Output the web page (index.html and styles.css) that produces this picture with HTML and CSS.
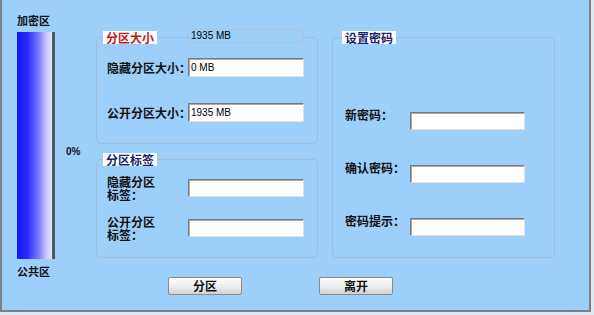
FILE: index.html
```html
<!DOCTYPE html>
<html lang="zh-CN">
<head>
    <meta charset="UTF-8">
    <title>分区</title>
    <link rel="stylesheet" href="styles.css">
</head>
<body>
    <div class="window">
        <div class="meter">
            <div class="meter-label">加密区</div>
            <div class="meter-bar"></div>
            <div class="meter-label">公共区</div>
        </div>
        <div class="percent">0%</div>

        <div class="panels">
            <div class="group group-size">
                <fieldset>
                    <legend>分区大小</legend>
                    <div class="rows rows-size">
                        <label class="row"><span>隐藏分区大小：</span><input type="text" value="0 MB"></label>
                        <label class="row"><span>公开分区大小：</span><input type="text" value="1935 MB"></label>
                    </div>
                </fieldset>
                <div class="total">1935 MB</div>
            </div>

            <div class="group group-pass">
                <fieldset>
                    <legend>设置密码</legend>
                    <div class="rows rows-pass">
                        <label class="row"><span>新密码：</span><input type="password"></label>
                        <label class="row"><span>确认密码：</span><input type="password"></label>
                        <label class="row"><span>密码提示：</span><input type="text"></label>
                    </div>
                </fieldset>
            </div>

            <div class="group group-tag">
                <fieldset>
                    <legend>分区标签</legend>
                    <div class="rows rows-tag">
                        <label class="row"><span>隐藏分区标签：</span><input type="text"></label>
                        <label class="row"><span>公开分区标签：</span><input type="text"></label>
                    </div>
                </fieldset>
            </div>

            <div class="actions">
                <button type="button">分区</button>
                <button type="button">离开</button>
            </div>
        </div>
    </div>
</body>
</html>
```

FILE: styles.css
```css
* {
    box-sizing: border-box;
}

body {
    margin: 0;
    background: #dfe8f1;
    font-family: "Noto Sans CJK SC", sans-serif;
    font-size: 12px;
    font-weight: bold;
    color: #111;
}

.window {
    width: 591px;
    height: 312px;
    display: flex;
    background: #9ccff9;
    border: 2px solid #75818c;
    border-top: none;
}

/* left meter */
.meter {
    width: 38px;
    margin-left: 15px;
    padding-top: 13px;
    display: flex;
    flex-direction: column;
}

.meter-label {
    height: 14px;
    line-height: 14px;
    font-size: 11px;
    white-space: nowrap;
}

.meter-bar {
    height: 227px;
    margin: 5px 0;
    background: linear-gradient(to right, #1414f6 0%, #2a2cff 30%, #7a7cff 62%, #c9cbff 85%, #e4e4ff 100%);
    border-right: 3px solid #4e5660;
}

.percent {
    width: 30px;
    margin-left: 11px;
    padding-top: 146px;
    font: bold 10px "Liberation Sans", sans-serif;
    line-height: 12px;
}

/* panels */
.panels {
    display: grid;
    grid-template-columns: 222px 223px;
    grid-template-rows: 113px 105px auto;
    column-gap: 14px;
    row-gap: 9px;
    padding-top: 31px;
    align-content: start;
}

.group {
    position: relative;
    display: flex;
}

.group-pass {
    grid-column: 2;
    grid-row: 1 / span 2;
}

.group-tag {
    grid-column: 1;
    grid-row: 2;
}

fieldset {
    flex: 1;
    margin: 0;
    padding: 0;
    min-width: 0;
    border: 1px solid #a3bcd3;
    border-radius: 5px;
}

legend {
    margin-left: 6px;
    padding: 0 3px;
    background: #fff;
    line-height: 13px;
    color: #1b1f6e;
}

.group-size legend {
    color: #c41818;
}

.group-pass legend {
    margin-left: 9px;
}

.total {
    position: absolute;
    left: 92px;
    top: -2px;
    width: 116px;
    height: 14px;
    padding-left: 2px;
    border: 1px solid #b2c4d4;
    background: #9ccff9;
    font: 10px "Liberation Sans", sans-serif;
    line-height: 12px;
    color: #000;
}

.rows {
    display: grid;
}

.row {
    display: grid;
    align-items: center;
}

.row span {
    white-space: nowrap;
}

.rows-size {
    padding: 14px 0 0 10px;
    row-gap: 26px;
}

.rows-size .row {
    grid-template-columns: 81px 116px;
}

.rows-tag {
    padding: 9px 0 0 10px;
    row-gap: 14px;
}

.rows-tag .row {
    grid-template-columns: 81px 116px;
}

.rows-tag .row span {
    width: 48px;
    white-space: normal;
    line-height: 13px;
}

.rows-pass {
    padding: 64px 0 0 12px;
    row-gap: 31px;
}

.rows-pass .row {
    grid-template-columns: 65px 115px;
    align-items: start;
}

.rows-pass .row span {
    line-height: 13px;
}

.rows-pass input {
    margin-top: 4px;
}

input {
    height: 19px;
    margin: 0;
    padding: 0 0 0 2px;
    border: 1px solid;
    border-color: #7a7a7a #e2e2e2 #e2e2e2 #7a7a7a;
    box-shadow: inset 1px 1px 0 #a9a9a9;
    background: #fff;
    font: 10px "Liberation Sans", sans-serif;
    color: #000;
    outline: none;
}

.rows-tag input,
.rows-pass input {
    height: 18px;
}

/* buttons */
.actions {
    grid-column: 1 / -1;
    display: flex;
    gap: 77px;
    padding-left: 72px;
    margin-top: 10px;
}

button {
    width: 74px;
    height: 18px;
    padding: 0;
    border: 1px solid #8c8c8c;
    border-radius: 2px;
    background: linear-gradient(#fdfdfd, #ececec 55%, #d2d2d2);
    font-family: "Noto Sans CJK SC", sans-serif;
    font-size: 12px;
    font-weight: bold;
    line-height: 16px;
    color: #111;
}
```
